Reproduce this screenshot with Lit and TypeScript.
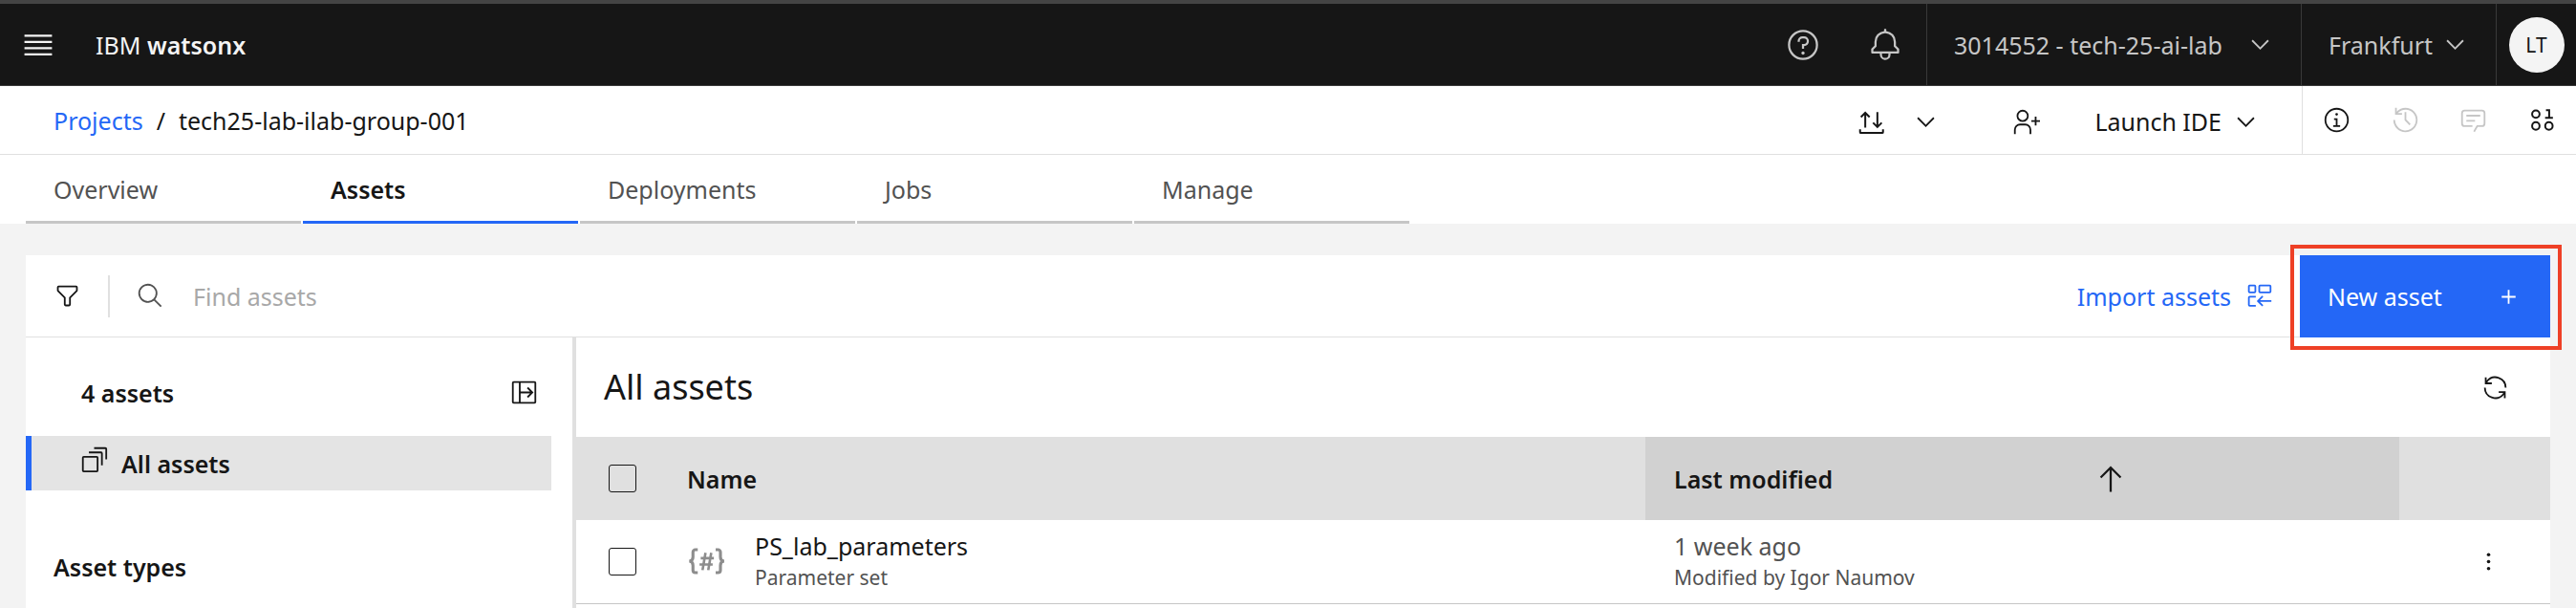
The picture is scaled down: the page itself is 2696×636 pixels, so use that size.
import { LitElement, html, css, svg } from "lit";
import { customElement, property, state } from "lit/decorators.js";
import { classMap } from "lit/directives/class-map.js";

/* Icon shapes, all on a 32-unit grid. */
const icons: Record<string, any> = {
  menu: svg`<path d="M3.2 6.4h25.6v2H3.2zM3.2 12.2h25.6v2H3.2zM3.2 18h25.6v2H3.2zM3.2 23.8h25.6v2H3.2z"/>`,
  help: svg`<path d="M16,2A14,14,0,1,0,30,16,14,14,0,0,0,16,2Zm0,26A12,12,0,1,1,28,16,12,12,0,0,1,16,28Z"/><circle cx="16" cy="23.5" r="1.5"/><path d="M17,8H15.5A4.49,4.49,0,0,0,11,12.5V13h2v-.5A2.5,2.5,0,0,1,15.5,10H17a2.5,2.5,0,0,1,0,5H15v4.5h2V17a4.5,4.5,0,0,0,0-9Z"/>`,
  bell: svg`<path d="M28.7071,19.293,26,16.5859V13a10.0136,10.0136,0,0,0-9-9.9492V1H15V3.0508A10.0136,10.0136,0,0,0,6,13v3.5859L3.2929,19.293A1,1,0,0,0,3,20v3a1,1,0,0,0,1,1h7v.7768a5.152,5.152,0,0,0,4.5,5.1987A5.0057,5.0057,0,0,0,21,25V24h7a1,1,0,0,0,1-1V20A1,1,0,0,0,28.7071,19.293ZM19,25a3,3,0,0,1-6,0V24h6Zm8-3H5V20.4141L7.707,17.707A1,1,0,0,0,8,17V13a8,8,0,0,1,16,0v4a1,1,0,0,0,.293.707L27,20.4141Z"/>`,
  chevron: svg`<path d="M16 22L6 12 7.4 10.6 16 19.2 24.6 10.6 26 12z"/>`,
  transfer: svg`<path fill="none" stroke="currentColor" stroke-width="2.2" d="M9 22.6V5.600M4 10.500l5-5 5 5M23 4.600v17M18 17l5 5 5-5M3 24.500v3.300a1 1 0 0 0 1 1h24.500a1 1 0 0 0 1-1v-3.300"/>`,
  addUser: svg`<path d="M32,14H28V10H26v4H22v2h4v4h2V16h4Z"/><path d="M12,4A5,5,0,1,1,7,9a5,5,0,0,1,5-5m0-2a7,7,0,1,0,7,7A7,7,0,0,0,12,2Z"/><path d="M22,30H20V25a5,5,0,0,0-5-5H9a5,5,0,0,0-5,5v5H2V25a7,7,0,0,1,7-7h6a7,7,0,0,1,7,7Z"/>`,
  info: svg`<path d="M17 22V14H13v2h2v6H12v2h8V22Z"/><path d="M16,8a1.500,1.500,0,1,0,1.500,1.500A1.500,1.500,0,0,0,16,8Z"/><path d="M16,30A14,14,0,1,1,30,16,14,14,0,0,1,16,30ZM16,4A12,12,0,1,0,28,16,12,12,0,0,0,16,4Z"/>`,
  history: svg`<path d="M20.59 22L15 16.41V7h2v8.580L22 20.590Z"/><path d="M16,2A13.94,13.94,0,0,0,6,6.230V2H4v8h8V8H7.080A12,12,0,1,1,4,16H2A14,14,0,1,0,16,2Z"/>`,
  chat: svg`<path d="M17.740,30,16,29l4-7h6a2,2,0,0,0,2-2V8a2,2,0,0,0-2-2H6A2,2,0,0,0,4,8V20a2,2,0,0,0,2,2h9v2H6a4,4,0,0,1-4-4V8A4,4,0,0,1,6,4H26a4,4,0,0,1,4,4V20a4,4,0,0,1-4,4H21.160Z"/><path d="M8 10H24V12H8zM8 16H18V18H8z"/>`,
  data: svg`<g fill="none" stroke="currentColor" stroke-width="2.2"><circle cx="8.800" cy="9.200" r="4.300"/><circle cx="8.800" cy="22.900" r="4.300"/><circle cx="23.900" cy="22.900" r="4.300"/><path d="M19.500 13.500h9M24.200 13.500V4.800h-3.700"/></g>`,
  filter: svg`<path d="M18,28H14a2,2,0,0,1-2-2V18.410L4.590,11A2,2,0,0,1,4,9.590V6A2,2,0,0,1,6,4H26a2,2,0,0,1,2,2V9.590A2,2,0,0,1,27.410,11L20,18.410V26A2,2,0,0,1,18,28ZM6,6V9.590l8,8V26h4V17.590l8-8V6Z"/>`,
  search: svg`<path d="M29,27.5859l-7.5521-7.5521a11.0177,11.0177,0,1,0-1.4141,1.4141L27.5859,29ZM4,13a9,9,0,1,1,9,9A9.010,9.010,0,0,1,4,13Z"/>`,
  importAssets: svg`<g fill="none" stroke="currentColor" stroke-width="2"><rect x="4" y="4" width="7.500" height="8" rx="1"/><rect x="16" y="4" width="13" height="8" rx="1"/><path d="M12 17H5a1 1 0 0 0-1 1v8.500a1 1 0 0 0 1 1h7M30 22H15M20 16.500l-5.500 5.500 5.500 5.500"/></g>`,
  add: svg`<path d="M17 15V8H15v7H8v2h7v7h2V17h7V15Z"/>`,
  panel: svg`<g fill="none" stroke="currentColor" stroke-width="2"><rect x="3" y="4" width="26" height="24" rx="1"/><path d="M11 4v24M11 16h14M20 10.500l5.500 5.500-5.500 5.500"/></g>`,
  stack: svg`<g fill="none" stroke="currentColor" stroke-width="2"><rect x="3" y="13" width="17" height="17" rx="1"/><path d="M10 8h14a1 1 0 0 1 1 1v14M16 3h13a1 1 0 0 1 1 1v12"/></g>`,
  refresh: svg`<path d="M12,10H6.780A11,11,0,0,1,27,16h2A13,13,0,0,0,6,7.680V4H4v8h8Z"/><path d="M20,22h5.220A11,11,0,0,1,5,16H3a13,13,0,0,0,23,8.320V28h2V20H20Z"/>`,
  arrowUp: svg`<path d="M16 4L6 14l1.410 1.410L15 7.830V28h2V7.830l7.590 7.580L26 14Z"/>`,
  kebab: svg`<circle cx="16" cy="8" r="2"/><circle cx="16" cy="16" r="2"/><circle cx="16" cy="24" r="2"/>`,
  params: svg`<g fill="none" stroke="currentColor" stroke-width="2.500"><path d="M9 6.400H7a2 2 0 0 0-2 2V12.500c0 2-.8 3.200-3 3.500 2.200.3 3 1.500 3 3.500v4.100a2 2 0 0 0 2 2H9M24 6.400h2a2 2 0 0 1 2 2V12.500c0 2 .8 3.200 3 3.500-2.200.3-3 1.500-3 3.500v4.100a2 2 0 0 1-2 2H24"/><path stroke-width="2.100" d="M15.500 9l-2.500 14.500M20.300 9l-2.500 14.500M11.500 13.500h11M10.500 18.800h11"/></g>`,
};

@customElement("ui-icon")
export class UiIcon extends LitElement {
  @property() name = "";

  static styles = css`
    :host { display: inline-flex; flex: none; width: 29px; height: 29px; }
    svg { width: 100%; height: 100%; fill: currentColor; }
  `;

  render() {
    return html`<svg viewBox="0 0 32 32" aria-hidden="true">${icons[this.name]}</svg>`;
  }
}

const tabs = ["Overview", "Assets", "Deployments", "Jobs", "Manage"];

const assets = [
  { name: "PS_lab_parameters", type: "Parameter set", modified: "1 week ago", by: "Modified by Igor Naumov" },
];

@customElement("app-root")
export class AppRoot extends LitElement {
  @state() private activeTab = "Assets";

  static styles = css`
    :host {
      display: flex;
      flex-direction: column;
      min-height: 100vh;
      background: #f3f3f3;
      color: #161616;
      font-family: "Noto Sans", "Open Sans", sans-serif;
      font-size: 25px;
      line-height: 32px;
    }
    *, *::before { box-sizing: border-box; }
    button, input, select {
      font: inherit;
      color: inherit;
      background: none;
      border: 0;
      border-radius: 0;
      margin: 0;
      padding: 0;
      appearance: none;
    }
    button, select { cursor: pointer; }
    button { display: flex; align-items: center; justify-content: center; }
    a { color: #2467f6; text-decoration: none; }
    h1, h2, p { margin: 0; font: inherit; }

    .header {
      display: flex;
      align-items: stretch;
      height: 90px;
      background: #161616;
      border-top: 4px solid #444444;
      border-bottom: 1px solid #393939;
      color: #c6c6c6;
    }
    .menu { width: 80px; color: #f4f4f4; }
    .large { width: 36px; height: 36px; }
    .brand { align-self: center; padding-left: 20px; color: #f4f4f4; }
    .brand b { font-weight: 600; }
    .end { display: flex; align-items: stretch; margin-left: auto; }
    .square { width: 86px; }
    .switcher {
      display: flex;
      align-items: center;
      padding: 0 28px;
      border-left: 1px solid #393939;
    }
    .account { width: 392px; }
    .region { width: 204px; }
    .switcher select { flex: 1; min-width: 0; }
    .switcher ui-icon { pointer-events: none; }
    .user { width: 84px; border-left: 1px solid #393939; }
    .avatar {
      display: flex;
      align-items: center;
      justify-content: center;
      width: 58px;
      height: 58px;
      border-radius: 50%;
      background: #f4f4f4;
      color: #161616;
      font-size: 21px;
    }

    .context {
      display: flex;
      align-items: stretch;
      height: 72px;
      background: #ffffff;
      border-bottom: 1px solid #e0e0e0;
    }
    .crumbs { display: flex; align-items: center; gap: 14px; padding-left: 56px; }
    .narrow { width: 57px; }
    .transfer { display: flex; margin-right: 33px; padding-top: 3px; }
    .context .square { padding-top: 3px; }
    .launch { gap: 11px; padding: 3px 44px 0 29px; }
    .side-actions { display: flex; width: 287px; border-left: 1px solid #e0e0e0; }
    .side-actions button { flex: 1; }
    .side-actions button:disabled { color: #c6c6c6; cursor: default; }

    .tabs { display: flex; gap: 2px; height: 72px; padding-left: 27px; background: #ffffff; }
    .tab {
      width: 288px;
      padding: 2px 29px 0;
      justify-content: flex-start;
      border-bottom: 3px solid #c6c6c6;
      color: #525252;
    }
    .tab.active { border-color: #2467f6; color: #161616; font-weight: 600; }

    .content {
      display: flex;
      flex-direction: column;
      flex: 1;
      margin: 33px 27px 0;
      background: #ffffff;
    }
    .toolbar {
      display: flex;
      align-items: center;
      height: 86px;
      border-bottom: 1px solid #e0e0e0;
    }
    .filter { align-self: stretch; width: 86px; }
    .rule { width: 2px; height: 44px; background: #e0e0e0; }
    .find { display: flex; align-items: center; flex: 1; gap: 30px; padding-left: 28px; color: #525252; }
    .find input { flex: 1; min-width: 0; outline: none; color: #161616; }
    .find input::placeholder { color: #a8a8a8; opacity: 1; }
    .import { gap: 15px; margin-right: 28px; color: #2467f6; }
    .new-asset {
      position: relative;
      justify-content: space-between;
      align-self: stretch;
      width: 262px;
      margin-bottom: -1px;
      padding: 0 29px;
      background: #2467f6;
      color: #ffffff;
    }
    /* Call-out frame drawn around the primary action. */
    .new-asset::before {
      content: "";
      position: absolute;
      inset: -11px -12px -13px -10px;
      border: 4px solid #ee4026;
      pointer-events: none;
    }

    .columns { display: flex; flex: 1; align-items: stretch; }
    .sidebar { width: 576px; border-right: 4px solid #e0e0e0; font-weight: 600; }
    .count {
      display: flex;
      align-items: center;
      justify-content: space-between;
      height: 103px;
      padding: 12px 36px 0 58px;
    }
    .all {
      display: flex;
      align-items: center;
      gap: 14px;
      height: 57px;
      margin-right: 22px;
      padding-left: 51px;
      border-left: 6px solid #2467f6;
      background: #e4e4e4;
      color: #161616;
    }
    .all ui-icon { margin-bottom: 8px; }
    .types { padding: 64px 29px 0; }

    .main { flex: 1; min-width: 0; }
    .title-row {
      display: flex;
      align-items: center;
      justify-content: space-between;
      height: 104px;
      padding: 0 29px;
    }
    .title { font-size: 36px; line-height: 44px; }
    .refresh { width: 57px; height: 57px; }
    table { width: 100%; border-collapse: collapse; table-layout: fixed; }
    th, td { padding: 0; text-align: left; font-weight: 400; }
    th { height: 87px; background: #e0e0e0; font-weight: 600; }
    td { height: 87px; border-bottom: 1px solid #c6c6c6; }
    .check-col { width: 116px; }
    .modified-col { width: 789px; }
    .menu-col { width: 158px; }
    th.sorted { background: #d1d1d1; }
    .sort {
      width: 100%;
      height: 86px;
      padding: 0 284px 0 30px;
      justify-content: space-between;
    }
    input[type="checkbox"] {
      display: block;
      width: 29px;
      height: 29px;
      margin-left: 34px;
      border: 1px solid #161616;
      border-radius: 3px;
    }
    .asset { display: flex; align-items: center; gap: 31px; }
    .asset ui-icon { width: 40px; height: 40px; color: #8d8d8d; }
    .asset a { color: #161616; }
    .stamp { padding-left: 30px; color: #525252; }
    .small { padding-top: 2px; font-size: 21px; line-height: 30px; color: #525252; }
    .more { width: 57px; height: 57px; margin-left: 65px; }
  `;

  render() {
    return html`
      <header class="header">
        <button class="menu" aria-label="Menu"><ui-icon class="large" name="menu"></ui-icon></button>
        <div class="brand">IBM <b>watsonx</b></div>
        <div class="end">
          <button class="square" aria-label="Help"><ui-icon class="large" name="help"></ui-icon></button>
          <button class="square" aria-label="Notifications"><ui-icon class="large" name="bell"></ui-icon></button>
          <label class="switcher account">
            <select aria-label="Account"><option>3014552 - tech-25-ai-lab</option></select>
            <ui-icon name="chevron"></ui-icon>
          </label>
          <label class="switcher region">
            <select aria-label="Region"><option>Frankfurt</option></select>
            <ui-icon name="chevron"></ui-icon>
          </label>
          <button class="user" aria-label="Profile"><span class="avatar">LT</span></button>
        </div>
      </header>

      <div class="context">
        <nav class="crumbs" aria-label="Breadcrumb">
          <a href="#projects">Projects</a><span>/</span><h1>tech25-lab-ilab-group-001</h1>
        </nav>
        <div class="end">
          <div class="transfer">
            <button class="narrow" aria-label="Import or export"><ui-icon name="transfer"></ui-icon></button>
            <button class="narrow" aria-label="Import or export options"><ui-icon name="chevron"></ui-icon></button>
          </div>
          <button class="square" aria-label="Add collaborators"><ui-icon name="addUser"></ui-icon></button>
          <button class="launch">Launch IDE<ui-icon name="chevron"></ui-icon></button>
          <div class="side-actions">
            <button aria-label="Information"><ui-icon name="info"></ui-icon></button>
            <button aria-label="History" disabled><ui-icon name="history"></ui-icon></button>
            <button aria-label="Comments" disabled><ui-icon name="chat"></ui-icon></button>
            <button aria-label="Data"><ui-icon name="data"></ui-icon></button>
          </div>
        </div>
      </div>

      <div class="tabs" role="tablist">
        ${tabs.map(
          (tab) => html`<button
            role="tab"
            class=${classMap({ tab: true, active: tab === this.activeTab })}
            aria-selected=${tab === this.activeTab}
            @click=${() => (this.activeTab = tab)}
          >${tab}</button>`
        )}
      </div>

      <main class="content">
        <div class="toolbar">
          <button class="filter" aria-label="Filter"><ui-icon name="filter"></ui-icon></button>
          <span class="rule"></span>
          <label class="find">
            <ui-icon name="search"></ui-icon>
            <input type="text" placeholder="Find assets" aria-label="Find assets" />
          </label>
          <button class="import">Import assets<ui-icon name="importAssets"></ui-icon></button>
          <button class="new-asset">New asset<ui-icon name="add"></ui-icon></button>
        </div>

        <div class="columns">
          <aside class="sidebar">
            <div class="count">
              <span>4 assets</span>
              <button aria-label="Toggle side panel"><ui-icon name="panel"></ui-icon></button>
            </div>
            <a class="all" href="#all"><ui-icon name="stack"></ui-icon>All assets</a>
            <h2 class="types">Asset types</h2>
          </aside>

          <section class="main">
            <div class="title-row">
              <h2 class="title">All assets</h2>
              <button class="refresh" aria-label="Refresh"><ui-icon name="refresh"></ui-icon></button>
            </div>
            <table>
              <thead>
                <tr>
                  <th class="check-col"><input type="checkbox" aria-label="Select all assets" /></th>
                  <th>Name</th>
                  <th class="modified-col sorted" aria-sort="ascending">
                    <button class="sort">Last modified<ui-icon class="large" name="arrowUp"></ui-icon></button>
                  </th>
                  <th class="menu-col"></th>
                </tr>
              </thead>
              <tbody>
                ${assets.map(
                  (asset) => html`<tr>
                    <td><input type="checkbox" aria-label="Select ${asset.name}" /></td>
                    <td>
                      <div class="asset">
                        <ui-icon name="params"></ui-icon>
                        <div>
                          <a href="#asset">${asset.name}</a>
                          <p class="small">${asset.type}</p>
                        </div>
                      </div>
                    </td>
                    <td class="stamp">
                      <p>${asset.modified}</p>
                      <p class="small">${asset.by}</p>
                    </td>
                    <td><button class="more" aria-label="Asset actions"><ui-icon name="kebab"></ui-icon></button></td>
                  </tr>`
                )}
              </tbody>
            </table>
          </section>
        </div>
      </main>
    `;
  }
}
